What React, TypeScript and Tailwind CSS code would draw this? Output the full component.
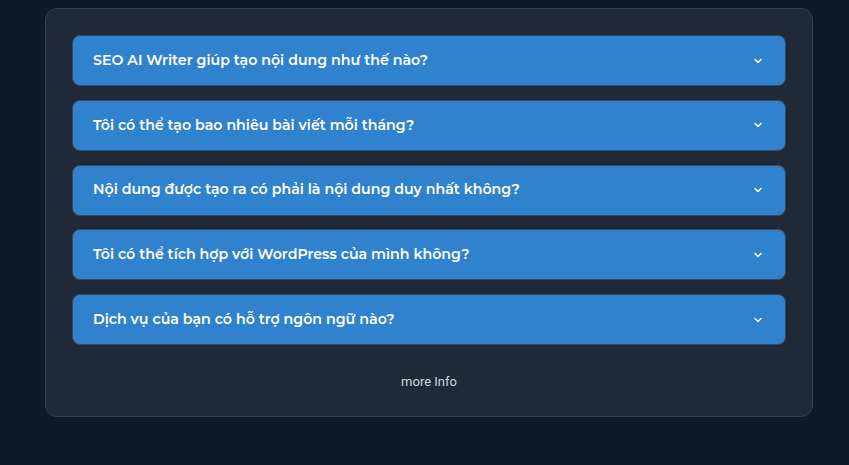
import React from "react";

const questions = [
  "SEO AI Writer giúp tạo nội dung như thế nào?",
  "Tôi có thể tạo bao nhiêu bài viết mỗi tháng?",
  "Nội dung được tạo ra có phải là nội dung duy nhất không?",
  "Tôi có thể tích hợp với WordPress của mình không?",
  "Dịch vụ của bạn có hỗ trợ ngôn ngữ nào?",
];

const Chevron = () => (
  <svg width="10" height="10" viewBox="0 0 10 10" fill="none">
    <path d="M2 3.5 5 6.5 8 3.5" stroke="white" strokeWidth="1.5" strokeLinecap="round" strokeLinejoin="round" />
  </svg>
);

export default function App() {
  return (
    <div className="min-h-[465px] bg-[#111827] pt-2 font-['Montserrat','Open_Sans',sans-serif]">
      <div className="mx-[45px] w-[768px] rounded-xl border border-[#374151] bg-[#1f2937] px-[26px] pt-[26px] pb-[24px]">
        <div className="flex flex-col gap-[13.75px]">
          {questions.map((q) => (
            <button
              key={q}
              className="flex h-[51px] w-full items-center justify-between rounded-lg border border-[#3a4a5e] bg-[#3182ce] pl-5 pr-[22px] text-left"
            >
              <span className="text-[14.2px] font-semibold text-white">{q}</span>
              <Chevron />
            </button>
          ))}
        </div>
        <div className="mt-[27px] text-center font-['Roboto',sans-serif] text-[13px] text-[#d1d5db]">
          more Info
        </div>
      </div>
    </div>
  );
}
